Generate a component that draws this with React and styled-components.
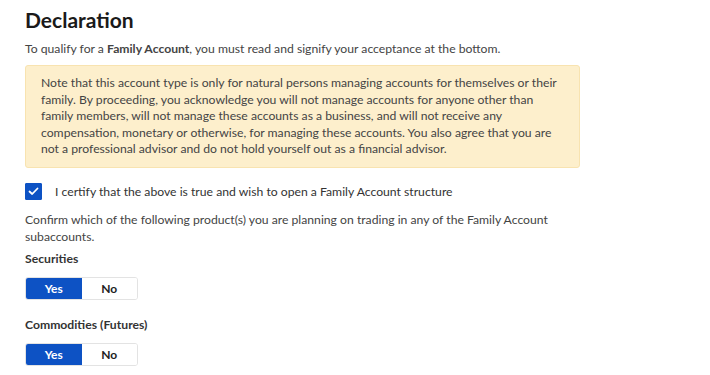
import React, { useState } from 'react';
import styled, { createGlobalStyle } from 'styled-components';

const GlobalStyle = createGlobalStyle`
  body {
    margin: 0;
    background: #ffffff;
    font-family: Lato, "Open Sans", Arial, sans-serif;
    color: #333333;
  }
`;

const Page = styled.div`
  padding: 7px 25px 0 25px;
  width: 710px;
  height: 375px;
  box-sizing: border-box;
  overflow: hidden;
`;

const Title = styled.h1`
  margin: 0;
  font-size: 21px;
  font-weight: 700;
  color: #1a1a1a;
  line-height: 26px;
`;

const Intro = styled.p`
  margin: 6.5px 0 0 0;
  font-size: 12.2px;
  line-height: 17px;
  color: #444;
`;

const Notice = styled.div`
  margin-top: 8.5px;
  width: 555px;
  box-sizing: border-box;
  background: #fdefcc;
  border: 1px solid #f8e3b0;
  border-radius: 3px;
  padding: 9px 15px;
  font-size: 12.2px;
  line-height: 16.5px;
  color: #444;
  white-space: nowrap;
`;

const CheckRow = styled.label`
  display: flex;
  align-items: center;
  gap: 13px;
  height: 17px;
  margin-top: 15.5px;
  font-size: 12.2px;
  color: #333;
  cursor: pointer;
`;

const Box = styled.span`
  width: 17px;
  height: 17px;
  box-sizing: border-box;
  border-radius: 1px;
  background: ${p => (p.$checked ? '#0d52c4' : '#fff')};
  border: 1px solid ${p => (p.$checked ? '#0d52c4' : '#999')};
  display: flex;
  align-items: center;
  justify-content: center;
`;

const Para = styled.p`
  margin: 10.5px 0 0 0;
  font-size: 12.2px;
  line-height: 17px;
  color: #444;
`;

const Label = styled.div`
  margin-top: ${p => p.$top}px;
  font-size: 12.2px;
  line-height: 16px;
  font-weight: 700;
  color: #333;
`;

const Toggle = styled.div`
  display: flex;
  margin-top: 10px;
  width: 113px;
  height: 23px;
  box-sizing: border-box;
  border: 1px solid #e3e3e3;
  border-radius: 3px;
  overflow: hidden;
`;

const Seg = styled.button`
  flex: 1;
  border: 0;
  padding: 0;
  margin: 0;
  font-family: inherit;
  font-size: 12px;
  font-weight: 700;
  cursor: pointer;
  background: ${p => (p.$active ? '#0d52c4' : '#fff')};
  color: ${p => (p.$active ? '#fff' : '#222')};
`;

const YesNo = ({ value, onChange }) => (
  <Toggle>
    <Seg $active={value} onClick={() => onChange(true)}>Yes</Seg>
    <Seg $active={!value} onClick={() => onChange(false)}>No</Seg>
  </Toggle>
);

export default function App() {
  const [checked, setChecked] = useState(true);
  const [sec, setSec] = useState(true);
  const [fut, setFut] = useState(true);
  return (
    <Page>
      <GlobalStyle />
      <Title>Declaration</Title>
      <Intro>
        To qualify for a <b>Family Account</b>, you must read and signify your acceptance at the bottom.
      </Intro>
      <Notice>
        Note that this account type is only for natural persons managing accounts for themselves or their
        <br />
        family. By proceeding, you acknowledge you will not manage accounts for anyone other than
        <br />
        family members, will not manage these accounts as a business, and will not receive any
        <br />
        compensation, monetary or otherwise, for managing these accounts. You also agree that you are
        <br />
        not a professional advisor and do not hold yourself out as a financial advisor.
      </Notice>
      <CheckRow onClick={() => setChecked(!checked)}>
        <Box $checked={checked}>
          {checked && (
            <svg width="11" height="9" viewBox="0 0 11 9">
              <path d="M1.5 4.5 L4.2 7 L9.5 1.5" fill="none" stroke="#fff" strokeWidth="1.8" strokeLinecap="round" strokeLinejoin="round" />
            </svg>
          )}
        </Box>
        I certify that the above is true and wish to open a Family Account structure
      </CheckRow>
      <Para>
        Confirm which of the following product(s) you are planning on trading in any of the Family Account
        <br />
        subaccounts.
      </Para>
      <Label $top={6.5}>Securities</Label>
      <YesNo value={sec} onChange={setSec} />
      <Label $top={17}>Commodities (Futures)</Label>
      <YesNo value={fut} onChange={setFut} />
    </Page>
  );
}
